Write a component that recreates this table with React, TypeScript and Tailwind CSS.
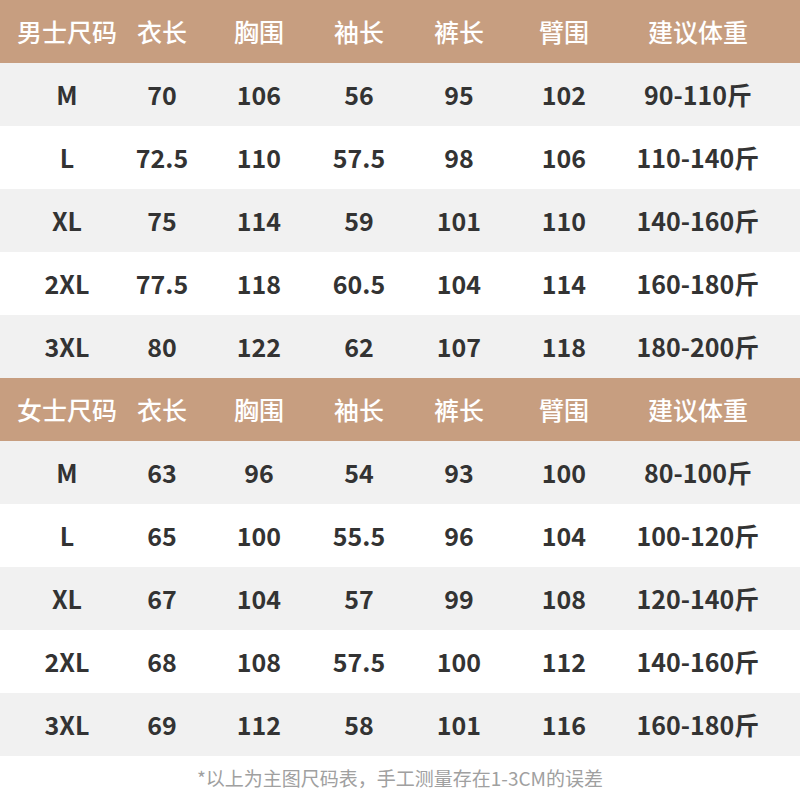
import React from 'react';

const heads = ['衣长', '胸围', '袖长', '裤长', '臂围', '建议体重'];

const men: string[][] = [
  ['M', '70', '106', '56', '95', '102', '90-110斤'],
  ['L', '72.5', '110', '57.5', '98', '106', '110-140斤'],
  ['XL', '75', '114', '59', '101', '110', '140-160斤'],
  ['2XL', '77.5', '118', '60.5', '104', '114', '160-180斤'],
  ['3XL', '80', '122', '62', '107', '118', '180-200斤'],
];

const women: string[][] = [
  ['M', '63', '96', '54', '93', '100', '80-100斤'],
  ['L', '65', '100', '55.5', '96', '104', '100-120斤'],
  ['XL', '67', '104', '57', '99', '108', '120-140斤'],
  ['2XL', '68', '108', '57.5', '100', '112', '140-160斤'],
  ['3XL', '69', '112', '58', '101', '116', '160-180斤'],
];

const cols = 'grid grid-cols-[134px_56px_138px_62px_138px_72px_196px] h-[63px]';

const Cell: React.FC<{ children: React.ReactNode }> = ({ children }) => (
  <div className="flex items-center justify-center whitespace-nowrap">{children}</div>
);

const Section: React.FC<{ title: string; rows: string[][] }> = ({ title, rows }) => (
  <div>
    <div className={`${cols} bg-[#c79e80] text-white text-[25px] font-medium`}>
      {[title, ...heads].map((h) => (
        <Cell key={h}>{h}</Cell>
      ))}
    </div>
    {rows.map((r, i) => (
      <div
        key={r[0]}
        className={`${cols} ${i % 2 === 0 ? 'bg-[#f1f1f1]' : 'bg-white'} text-[#333333] text-[25px] font-bold`}
      >
        {r.map((v, j) => (
          <Cell key={j}>{v}</Cell>
        ))}
      </div>
    ))}
  </div>
);

export default function App() {
  return (
    <div
      className="w-[800px] h-[800px] bg-white overflow-hidden"
      style={{ fontFamily: '"Noto Sans CJK SC", "Noto Sans", sans-serif' }}
    >
      <Section title="男士尺码" rows={men} />
      <Section title="女士尺码" rows={women} />
      <div className="h-[44px] flex items-center justify-center text-[19px] text-[#a0a0a0]">
        *以上为主图尺码表，手工测量存在1-3CM的误差
      </div>
    </div>
  );
}
